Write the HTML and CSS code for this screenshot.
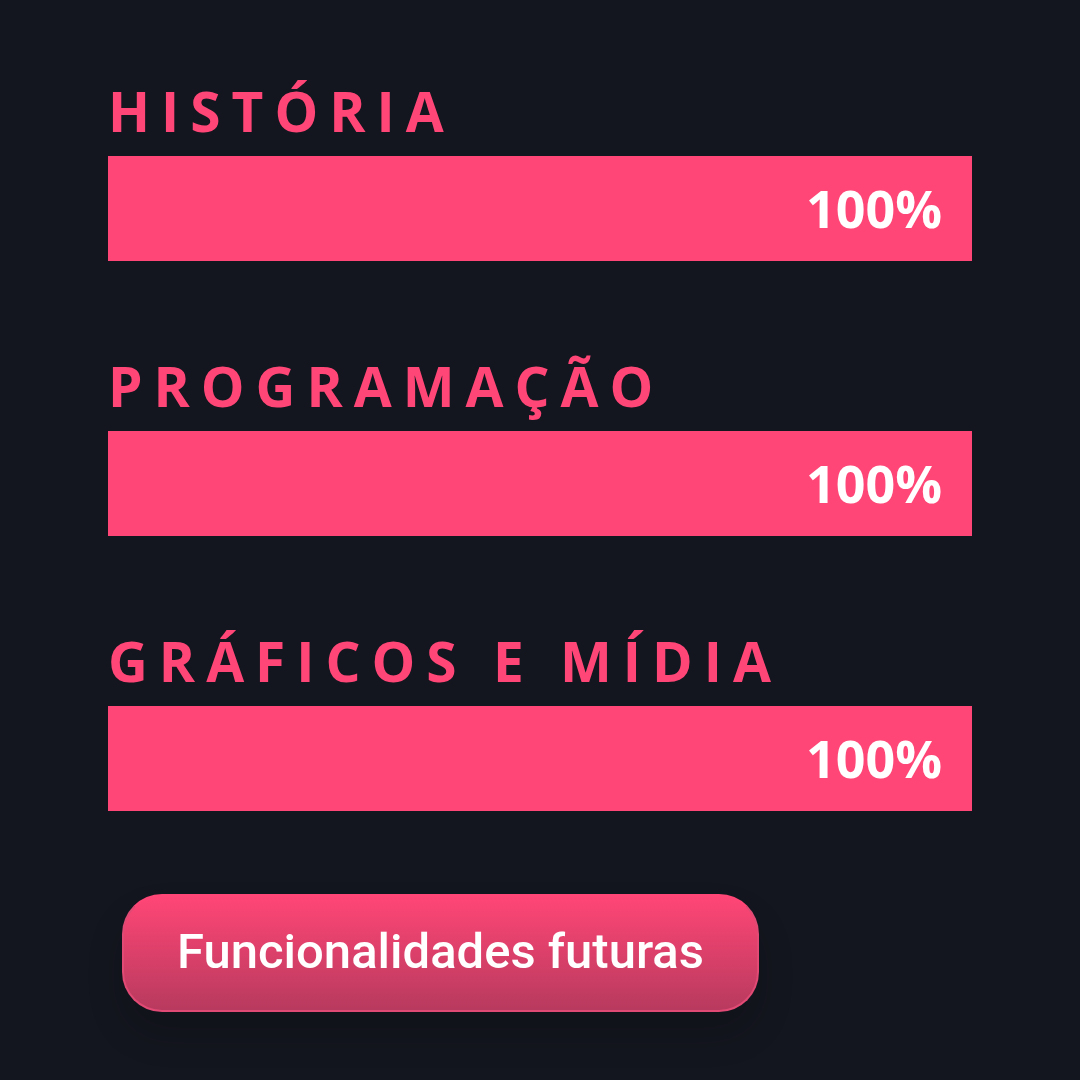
FILE: index.html
```html
<!DOCTYPE html>
<html lang="pt-BR">
<head>
	<meta charset="utf-8">
	<meta name="viewport" content="width=device-width, initial-scale=1">
	<title>Progresso</title>
	<link rel="stylesheet" href="styles.css">
</head>
<body>

	<div class="skill">
		<h3>História</h3>
		<div class="bar-cont">
			<div class="bar" style="width: 100%">100%</div>
		</div>
	</div>
	<div class="skill">
		<h3>Programação</h3>
		<div class="bar-cont">
			<div class="bar" style="width: 100%">100%</div>
		</div>
	</div>
	<div class="skill">
		<h3>Gráficos e mídia</h3>
		<div class="bar-cont">
			<div class="bar" style="width: 100%">100%</div>
		</div>
	</div>

	<button type="button" class="btn">Funcionalidades futuras</button>

</body>
</html>
```

FILE: styles.css
```css
* {
	box-sizing: border-box;
}

body {
	margin: 0;
	padding: 72px 10% 68px;
	background-color: #14161f;
	font-family: "Open Sans", sans-serif;
}

.skill + .skill {
	margin-top: 86px;
}
.skill h3 {
	margin: 0 0 6px;
	color: #ff4676;
	font-size: 55px;
	font-weight: 700;
	line-height: 78px;
	letter-spacing: 11px;
	text-transform: uppercase;
}

.bar-cont {
	width: 100%;
}
.bar {
	padding: 0 30px 2px;
	background-color: #ff4676;
	color: #fff;
	font-size: 52px;
	font-weight: 700;
	line-height: 103px;
	text-align: right;
}

.btn {
	display: block;
	margin: 83px 14px 0;
	padding: 27px 53px 29px;
	border: 2px solid #e04a74;
	border-top-color: #ff4676;
	border-radius: 40px;
	background: linear-gradient(#ff4676, #b83a5e);
	box-shadow: 0 22px 36px rgba(0, 0, 0, 0.16);
	color: #fff;
	font-family: Roboto, sans-serif;
	font-size: 49px;
	font-weight: 500;
	line-height: 58px;
	cursor: pointer;
}
```
